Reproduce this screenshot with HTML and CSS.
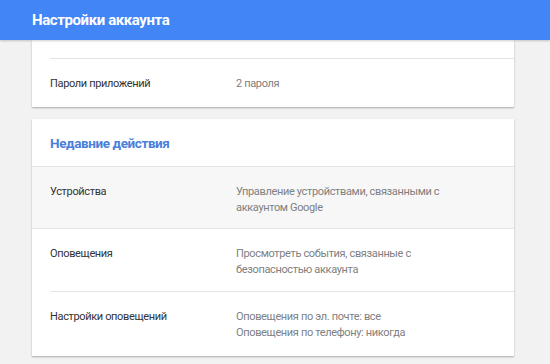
FILE: index.html
```html
<!DOCTYPE html>
<html lang="ru">
<head>
<meta charset="utf-8">
<link rel="stylesheet" href="styles.css">
</head>
<body>
<header class="appbar"><h1 class="appbar-title">Настройки аккаунта</h1></header>
<main class="content">
  <section class="card card-cut">
    <div class="row-cut"></div>
    <div class="row">
      <div class="label">Пароли приложений</div>
      <div class="value">2 пароля</div>
    </div>
  </section>
  <section class="card">
    <h2 class="card-title">Недавние действия</h2>
    <div class="row row-hl">
      <div class="label">Устройства</div>
      <div class="value">Управление устройствами, связанными с<br>аккаунтом Google</div>
    </div>
    <div class="row row-inset">
      <div class="label">Оповещения</div>
      <div class="value">Просмотреть события, связанные с<br>безопасностью аккаунта</div>
    </div>
    <div class="row">
      <div class="label">Настройки оповещений</div>
      <div class="value">Оповещения по эл. почте: все<br>Оповещения по телефону: никогда</div>
    </div>
  </section>
</main>
</body>
</html>
```
FILE: styles.css
```css
html, body {
  margin: 0;
  padding: 0;
  background: #f2f2f2;
  font-family: Roboto, "Liberation Sans", Arial, sans-serif;
  height: 100%;
  overflow: hidden;
}
.appbar {
  position: relative;
  z-index: 2;
  height: 40px;
  background: #4285f4;
  box-shadow: 0 1px 2px rgba(0,0,0,0.2);
  display: flex;
  align-items: center;
  padding-left: 32px;
}
.appbar-title {
  margin: 0;
  color: #fff;
  font-size: 15px;
  font-weight: 700;
  letter-spacing: -0.4px;
}
.content {
  width: 482px;
  margin-left: 32px;
  display: flex;
  flex-direction: column;
  gap: 12px;
}
.card {
  background: #fff;
  box-shadow: 0 1px 2px rgba(0,0,0,0.22), 0 1px 1px rgba(0,0,0,0.08);
}
.row-cut {
  height: 18px;
  margin-left: 18px;
  border-bottom: 1px solid #e3e3e3;
}
.card-title {
  margin: 0;
  height: 47px;
  display: flex;
  align-items: center;
  padding-left: 18px;
  font-size: 13.5px;
  font-weight: 700;
  letter-spacing: -0.4px;
  color: #4a7fdc;
  border-bottom: 1px solid #e3e3e3;
}
.row {
  display: flex;
  padding: 17px 0 15px 18px;
  font-size: 11px;
  letter-spacing: -0.35px;
  line-height: 16px;
}
.row-hl {
  background: #f7f7f7;
  border-bottom: 1px solid #e6e6e6;
  padding-bottom: 12px;
}
.row-inset {
  padding-bottom: 13px;
  border-bottom: 1px solid #e6e6e6;
  margin-left: 18px;
  padding-left: 0;
}
.label {
  width: 186px;
  flex: none;
  color: #333;
}
.value {
  color: #808080;
}
```
